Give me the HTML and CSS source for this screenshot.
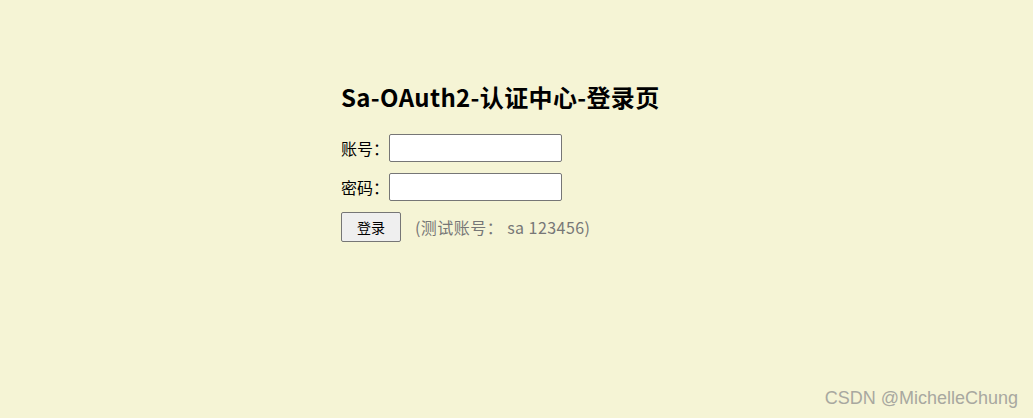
FILE: index.html
```html
<!DOCTYPE html>
<html>
<head>
<meta charset="utf-8">
<link rel="stylesheet" href="styles.css">
</head>
<body>
<div class="login">
  <h2 class="title">Sa-OAuth2-认证中心-登录页</h2>
  <div class="row"><span class="label">账号：</span><input class="field" type="text"></div>
  <div class="row"><span class="label">密码：</span><input class="field" type="password"></div>
  <div class="row actions"><button class="btn">登录</button><span class="hint">(测试账号： sa 123456)</span></div>
</div>
<div class="mark">CSDN @MichelleChung</div>
</body>
</html>
```
FILE: styles.css
```css
html, body { margin: 0; padding: 0; }
body {
  background: #f5f4d5;
  width: 1033px;
  height: 418px;
  font-family: "Noto Sans CJK SC", "Noto Sans", sans-serif;
  font-size: 16px;
  color: #000;
  position: relative;
  overflow: hidden;
}
.login {
  padding: 78px 0 0 341px;
  display: flex;
  flex-direction: column;
}
.title {
  margin: 0 0 18px 0;
  font-size: 24px;
  font-weight: bold;
  line-height: 38px;
  letter-spacing: 0.35px;
}
.row {
  display: flex;
  align-items: center;
  height: 28px;
  margin-bottom: 11px;
}
.label { width: 48px; line-height: 28px; }
.field {
  box-sizing: border-box;
  width: 173px;
  height: 28px;
  border: 1px solid #767676;
  border-radius: 2px;
  background: #fff;
  margin: 0;
}
.actions { height: 30px; }
.btn {
  box-sizing: border-box;
  width: 60px;
  height: 30px;
  margin: 0;
  border: 1px solid #767676;
  border-radius: 2px;
  background: #efefef;
  font-family: "Noto Sans CJK SC", sans-serif;
  font-size: 14px;
  color: #000;
}
.hint { margin-left: 14px; color: #777; font-size: 16px; letter-spacing: 0.45px; }
.mark {
  position: absolute;
  right: 15px;
  bottom: 9px;
  font-family: "Liberation Sans", Arial, sans-serif;
  font-size: 18px;
  color: #a8a8a0;
}
```
